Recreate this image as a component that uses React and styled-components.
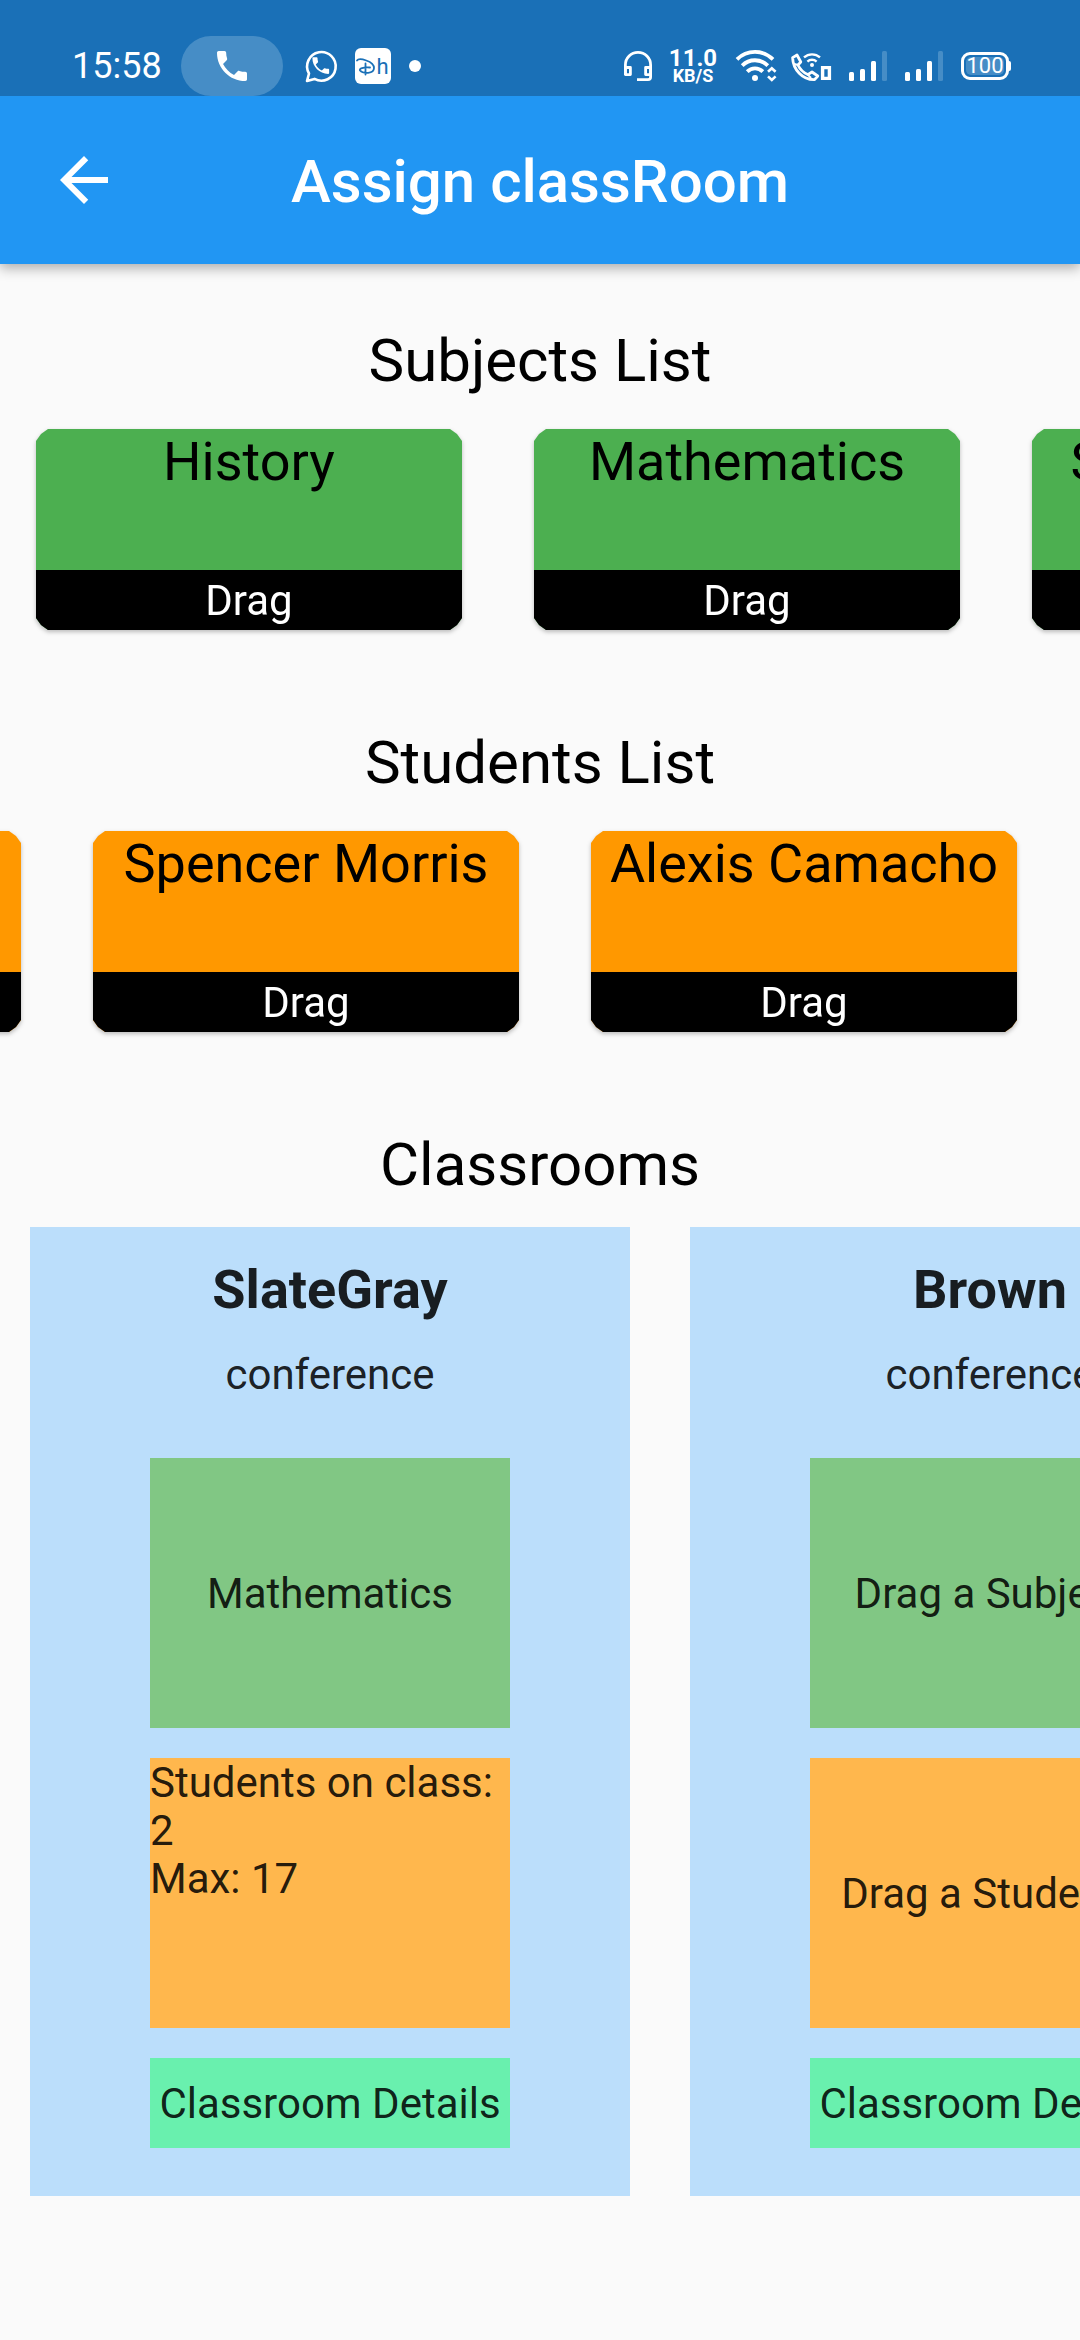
import React from "react";
import styled, { createGlobalStyle } from "styled-components";

const GlobalStyle = createGlobalStyle`
  *, *::before, *::after { box-sizing: border-box; }
  body {
    margin: 0;
    background: #fafafa;
    color: rgba(0, 0, 0, 0.87);
    font-family: Roboto, "Liberation Sans", sans-serif;
  }
  h1, h2, h3, p { margin: 0; }
`;

const Page = styled.div`
  min-height: 100vh;
  overflow: hidden;
`;

/* ---------- status bar ---------- */

const StatusBar = styled.div`
  position: relative;
  z-index: 1;
  display: flex;
  justify-content: space-between;
  height: 96px;
  padding: 36px 68px 0 72px;
  background: #1a70b7;
  color: #fff;
`;

const StatusGroup = styled.div`
  display: flex;
  align-items: center;
  gap: 18px;
`;

const Clock = styled.time`
  width: 91px;
  font-size: 36px;
  line-height: 60px;
  white-space: nowrap;
`;

const CallPill = styled.span`
  display: flex;
  align-items: center;
  justify-content: center;
  width: 102px;
  height: 60px;
  margin-right: 4px;
  border-radius: 30px;
  background: #468dc6;
`;

const StatusIcon = styled.svg`
  display: block;
  flex: none;
  overflow: visible;
`;

const MoreDot = styled.span`
  width: 12px;
  height: 12px;
  border-radius: 50%;
  background: #fff;
`;

const NetSpeed = styled.span`
  display: flex;
  flex-direction: column;
  align-items: center;
  width: 48px;
  font-weight: 700;
  font-size: 24px;
  line-height: 20px;
`;

const NetUnit = styled.span`
  font-size: 18px;
  line-height: 16px;
`;

const Battery = styled.span`
  position: relative;
  display: block;
  width: 48px;
  height: 28px;
  margin-right: 3px;
  padding: 2px;
  border: 3px solid #fff;
  border-radius: 9px;

  &::after {
    content: "";
    position: absolute;
    top: 6px;
    right: -5px;
    width: 3px;
    height: 10px;
    border-radius: 0 2px 2px 0;
    background: #fff;
  }
`;

const BatteryLevel = styled.span`
  display: flex;
  justify-content: center;
  border-radius: 5px;
  background: #468dc6;
  font-size: 22px;
  line-height: 18px;
`;

/* ---------- app bar ---------- */

const AppBar = styled.header`
  display: grid;
  grid-template-columns: 72px 1fr 72px;
  align-items: center;
  height: 168px;
  padding: 0 48px;
  background: #2196f3;
  color: #fff;
  box-shadow: 0 4px 12px rgba(0, 0, 0, 0.32);
`;

const BackButton = styled.button`
  display: flex;
  width: 72px;
  height: 72px;
  padding: 0;
  border: 0;
  background: none;
  color: inherit;
`;

const Title = styled.h1`
  padding-top: 4px;
  font-weight: 500;
  font-size: 60px;
  line-height: 72px;
  text-align: center;
`;

/* ---------- content ---------- */

const Content = styled.main`
  display: flex;
  flex-direction: column;
  gap: 96px;
  padding-top: 60px;
`;

const Section = styled.section`
  display: flex;
  flex-direction: column;
  gap: ${(p) => p.$gap}px;
`;

const Heading = styled.h2`
  color: #000;
  font-weight: 400;
  font-size: 60px;
  line-height: 74px;
  text-align: center;
`;

const DragRow = styled.div`
  display: flex;
  justify-content: ${(p) => (p.$scrolledToEnd ? "flex-end" : "flex-start")};
  gap: 72px;
  padding: ${(p) => (p.$scrolledToEnd ? "0 63px 0 0" : "0 0 0 36px")};
`;

const DragShadow = styled.div`
  flex: none;
  width: 426px;
  filter: drop-shadow(0 2px 2px rgba(0, 0, 0, 0.25));
`;

const DragCard = styled.div`
  display: flex;
  flex-direction: column;
  background: ${(p) => p.$color};
  clip-path: polygon(
    12px 0, calc(100% - 12px) 0, calc(100% - 5px) 5px, 100% 12px,
    100% calc(100% - 12px), calc(100% - 5px) calc(100% - 5px), calc(100% - 12px) 100%,
    12px 100%, 5px calc(100% - 5px), 0 calc(100% - 12px), 0 12px, 5px 5px
  );
`;

const DragName = styled.h3`
  height: 141px;
  color: #000;
  font-weight: 400;
  font-size: 54px;
  line-height: 66px;
  text-align: center;
  white-space: nowrap;
`;

const DragHandle = styled.button`
  height: 60px;
  padding: 2px 0 0;
  border: 0;
  background: #000;
  color: #fff;
  font: inherit;
  font-size: 42px;
  line-height: 58px;
`;

const RoomRow = styled.div`
  display: flex;
  gap: 60px;
  padding: 0 30px;
`;

const RoomCard = styled.article`
  display: flex;
  flex: none;
  flex-direction: column;
  align-items: center;
  gap: 30px;
  width: 600px;
  padding: 31px 0 48px;
  background: #bbdefb;
  font-size: 42px;
  line-height: 48px;
`;

const RoomName = styled.h3`
  font-weight: 700;
  font-size: 54px;
  line-height: 63px;
`;

const RoomLayout = styled.p`
  margin-bottom: 29px;
`;

const DropZone = styled.div`
  display: flex;
  align-items: ${(p) => (p.$filled ? "flex-start" : "center")};
  justify-content: ${(p) => (p.$filled ? "flex-start" : "center")};
  width: 360px;
  height: 270px;
  padding-top: ${(p) => (p.$filled ? 1 : 2)}px;
  background: ${(p) => p.$color};
`;

const DetailsButton = styled.button`
  width: 360px;
  height: 90px;
  padding: 2px 0 0;
  border: 0;
  background: #69f0ae;
  color: inherit;
  font: inherit;
`;

/* ---------- icons ---------- */

const CALL_PATH =
  "M6.62 10.79c1.44 2.83 3.76 5.14 6.59 6.59l2.2-2.2c.27-.27.67-.36 1.02-.24 1.12.37 2.33.57 3.57.57.55 0 1 .45 1 1V20c0 .55-.45 1-1 1-9.39 0-17-7.61-17-17 0-.55.45-1 1-1h3.5c.55 0 1 .45 1 1 0 1.25.2 2.45.57 3.57.11.35.03.74-.25 1.02l-2.2 2.2z";

const CallIcon = () => (
  <StatusIcon width="40" height="40" viewBox="0 0 24 24" fill="#fff" aria-hidden="true">
    <path d={CALL_PATH} />
  </StatusIcon>
);

const WhatsAppIcon = () => (
  <StatusIcon width="32" height="34" viewBox="0 0 32 34" aria-hidden="true">
    <path
      d="M2 32 L4 24.5 A14.3 14.3 0 1 1 9.5 29.9 Z"
      fill="none"
      stroke="#fff"
      strokeWidth="2.6"
      strokeLinejoin="round"
    />
    <path d={CALL_PATH} fill="#fff" transform="translate(4.6 5.4) scale(.93)" />
  </StatusIcon>
);

const HotstarIcon = () => (
  <StatusIcon width="36" height="36" viewBox="0 0 36 36" aria-hidden="true">
    <rect width="36" height="36" rx="6" fill="#fff" />
    <path
      d="M2 12.5 C4 9.5 19 13 19 20 C19 26 8 26 5 22.5 C4 20.5 8 19 15 19.5 M10.5 15.5 V26.5"
      fill="none"
      stroke="#1a70b7"
      strokeWidth="1.8"
      strokeLinecap="round"
    />
    <text x="21.5" y="26" fontSize="22" fontFamily="Roboto, sans-serif" fill="#1a70b7">
      h
    </text>
  </StatusIcon>
);

const HeadsetIcon = () => (
  <StatusIcon width="28" height="32" viewBox="0 0 28 32" fill="none" stroke="#fff" strokeWidth="2.8" aria-hidden="true">
    <path d="M2.4 25 V15 A12.6 12.6 0 0 1 27.6 15 V27 Q27.6 29.6 25 29.6 H14" />
    <path d="M2.4 17.5 H7.4 V24.6 H2.4 Z M27.6 17.5 H22.6 V24.6 H27.6 Z" strokeLinejoin="round" />
  </StatusIcon>
);

const WifiIcon = () => (
  <StatusIcon width="38" height="32" viewBox="0 0 38 32" fill="none" stroke="#fff" strokeWidth="3.8" aria-hidden="true">
    <path d="M2 9.4 A25.5 25.5 0 0 1 38 9.4" />
    <path d="M7.2 15.6 A18 18 0 0 1 32.8 15.6" />
    <path d="M12.2 21.6 A11 11 0 0 1 27.8 21.6" />
    <circle cx="20" cy="28" r="3" fill="#fff" stroke="none" />
    <path d="M33 21.8 L36.8 18.2 L40.6 21.8 M33 26.4 L36.8 30 L40.6 26.4" strokeWidth="2.6" />
  </StatusIcon>
);

const WifiCallIcon = () => (
  <StatusIcon width="40" height="32" viewBox="0 0 40 32" fill="none" stroke="#fff" strokeWidth="2.8" aria-hidden="true">
    <path
      d="M1.6 7.6 L6 5 L9.8 12 L7 15 C9 19.5 12.5 22.6 16.8 24.6 L21 22 L26.8 26 L23.6 29.6 C11.5 30 2 19.5 1.6 7.6 Z"
      strokeLinejoin="round"
    />
    <path d="M3.4 14 L7 15 M16.8 24.6 L20 28" strokeWidth="2" />
    <path d="M13 7.4 A12 12 0 0 1 29 7.4 M16.4 11.6 A6.8 6.8 0 0 1 25.6 11.6" strokeWidth="2.4" />
    <circle cx="21" cy="15" r="2" fill="#fff" stroke="none" />
    <path d="M31.6 17.6 H38.4 V28.4 H31.6 Z" strokeWidth="3.4" />
  </StatusIcon>
);

const SignalIcon = () => (
  <StatusIcon width="38" height="32" viewBox="0 0 38 32" fill="#fff" aria-hidden="true">
    <rect x="0" y="22" width="5" height="9" rx="1.5" />
    <rect x="11" y="19" width="5" height="12" rx="1.5" />
    <rect x="22" y="11" width="5" height="20" rx="1.5" />
    <rect x="33" y="1" width="5" height="30" rx="1.5" fill="#468dc6" />
  </StatusIcon>
);

const BackIcon = () => (
  <svg width="72" height="72" viewBox="0 0 24 24" fill="currentColor" aria-hidden="true">
    <path d="M20 11H7.83l5.59-5.59L12 4l-8 8 8 8 1.41-1.41L7.83 13H20v-2z" />
  </svg>
);

/* ---------- data ---------- */

const subjects = ["History", "Mathematics", "Social Science"];
const students = ["Taylor Reed", "Spencer Morris", "Alexis Camacho"];
const rooms = [
  { name: "SlateGray", layout: "conference", subject: "Mathematics", enrolled: 2, max: 17 },
  { name: "Brown", layout: "conference" },
];

function DragList({ title, names, color, scrolledToEnd }) {
  return (
    <Section $gap={31}>
      <Heading>{title}</Heading>
      <DragRow $scrolledToEnd={scrolledToEnd}>
        {names.map((name) => (
          <DragShadow key={name}>
            <DragCard $color={color}>
              <DragName>{name}</DragName>
              <DragHandle type="button">Drag</DragHandle>
            </DragCard>
          </DragShadow>
        ))}
      </DragRow>
    </Section>
  );
}

function Room({ room }) {
  const filled = room.enrolled > 0;
  return (
    <RoomCard>
      <RoomName>{room.name}</RoomName>
      <RoomLayout>{room.layout}</RoomLayout>
      <DropZone $color="#81c784">{room.subject || "Drag a Subject"}</DropZone>
      <DropZone $color="#ffb74d" $filled={filled}>
        {filled ? (
          <p>
            Students on class: {room.enrolled}
            <br />
            Max: {room.max}
          </p>
        ) : (
          "Drag a Students"
        )}
      </DropZone>
      <DetailsButton type="button">Classroom Details</DetailsButton>
    </RoomCard>
  );
}

export default function App() {
  return (
    <Page>
      <GlobalStyle />
      <StatusBar>
        <StatusGroup>
          <Clock>15:58</Clock>
          <CallPill>
            <CallIcon />
          </CallPill>
          <WhatsAppIcon />
          <HotstarIcon />
          <MoreDot />
        </StatusGroup>
        <StatusGroup>
          <HeadsetIcon />
          <NetSpeed>
            11.0
            <NetUnit>KB/S</NetUnit>
          </NetSpeed>
          <WifiIcon />
          <WifiCallIcon />
          <SignalIcon />
          <SignalIcon />
          <Battery>
            <BatteryLevel>100</BatteryLevel>
          </Battery>
        </StatusGroup>
      </StatusBar>
      <AppBar>
        <BackButton type="button" aria-label="Back">
          <BackIcon />
        </BackButton>
        <Title>Assign classRoom</Title>
      </AppBar>
      <Content>
        <DragList title="Subjects List" names={subjects} color="#4caf50" />
        <DragList title="Students List" names={students} color="#ff9800" scrolledToEnd />
        <Section $gap={25}>
          <Heading>Classrooms</Heading>
          <RoomRow>
            {rooms.map((room) => (
              <Room key={room.name} room={room} />
            ))}
          </RoomRow>
        </Section>
      </Content>
    </Page>
  );
}
